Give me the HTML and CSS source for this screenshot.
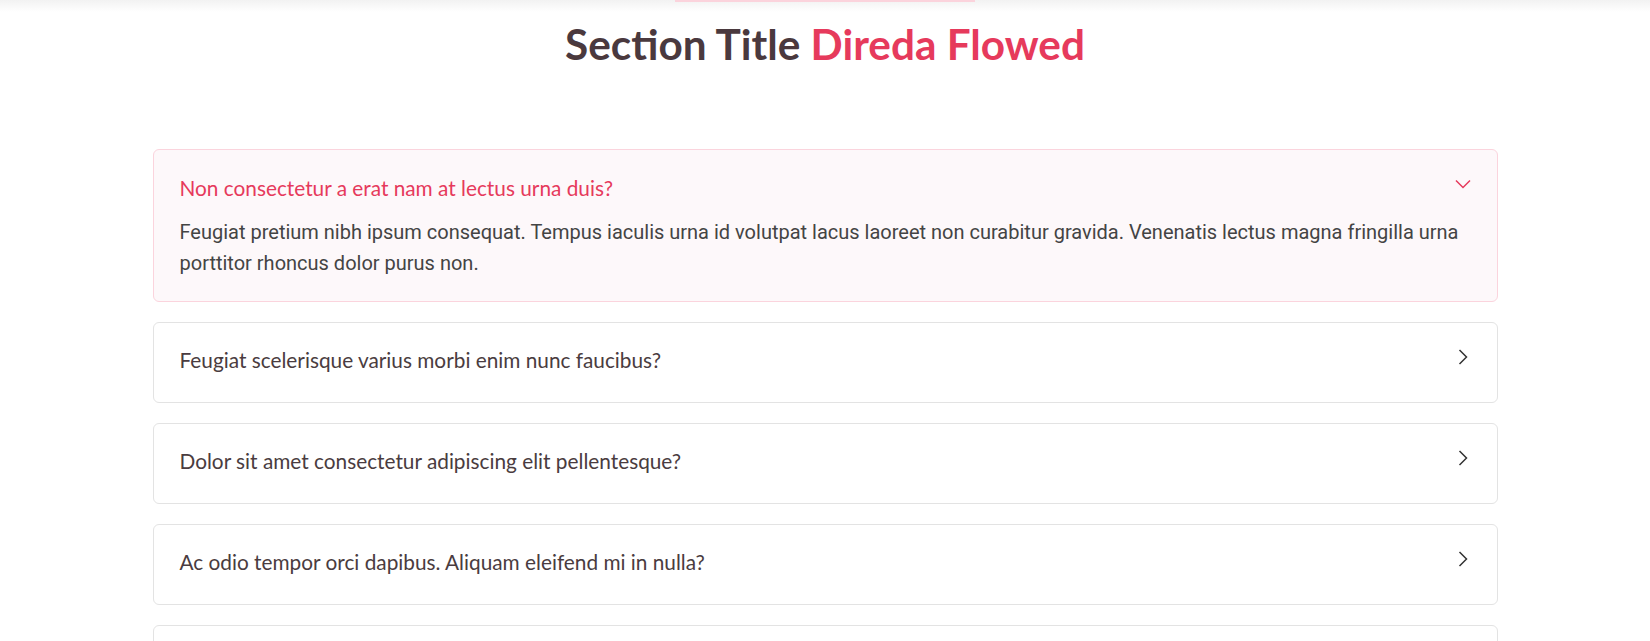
FILE: index.html
```html
<!DOCTYPE html>
<html lang="en">
<head>
<meta charset="utf-8">
<title>FAQ</title>
<link rel="stylesheet" href="styles.css">
</head>
<body>
<div class="topbar"><div class="topbar-accent"></div></div>
<section class="faq">
  <h2 class="faq-title">Section Title <span class="faq-title-accent">Direda Flowed</span></h2>
  <div class="faq-list">
    <div class="faq-item faq-item--active">
      <div class="faq-q">Non consectetur a erat nam at lectus urna duis?</div>
      <div class="faq-a">Feugiat pretium nibh ipsum consequat. Tempus iaculis urna id volutpat lacus laoreet non curabitur gravida. Venenatis lectus magna fringilla urna porttitor rhoncus dolor purus non.</div>
      <svg class="faq-icon" viewBox="0 0 16 16"><path d="M1 4.5 L8 11.5 L15 4.5"/></svg>
    </div>
    <div class="faq-item">
      <div class="faq-q">Feugiat scelerisque varius morbi enim nunc faucibus?</div>
      <svg class="faq-icon" viewBox="0 0 16 16"><path d="M1 4.5 L8 11.5 L15 4.5"/></svg>
    </div>
    <div class="faq-item">
      <div class="faq-q">Dolor sit amet consectetur adipiscing elit pellentesque?</div>
      <svg class="faq-icon" viewBox="0 0 16 16"><path d="M1 4.5 L8 11.5 L15 4.5"/></svg>
    </div>
    <div class="faq-item">
      <div class="faq-q">Ac odio tempor orci dapibus. Aliquam eleifend mi in nulla?</div>
      <svg class="faq-icon" viewBox="0 0 16 16"><path d="M1 4.5 L8 11.5 L15 4.5"/></svg>
    </div>
    <div class="faq-item">
      <div class="faq-q">Tempus quam pellentesque nec nam aliquam sem et tortor consequat?</div>
      <svg class="faq-icon" viewBox="0 0 16 16"><path d="M1 4.5 L8 11.5 L15 4.5"/></svg>
    </div>
  </div>
</section>
</body>
</html>
```
FILE: styles.css
```css
* { box-sizing: border-box; }
html, body { margin: 0; padding: 0; background: #fff; }
body { font-family: "Lato", "Noto Sans", sans-serif; color: #4a3c40; overflow: hidden; }

.topbar {
  height: 12px;
  background: linear-gradient(#f2f2f2, #ffffff);
}
.topbar-accent {
  width: 300px;
  height: 2px;
  margin: 0 auto;
  background: #fbd3dc;
}

.faq-title {
  margin: 8px 0 0;
  text-align: center;
  font-size: 42.3px;
  line-height: 48px;
  font-weight: 700;
  color: #4a393e;
}
.faq-title-accent { color: #e63a5c; }

.faq-list {
  width: 1345px;
  margin: 81px auto 0;
  display: flex;
  flex-direction: column;
  gap: 20px;
}

.faq-item {
  position: relative;
  border: 1px solid #e3e3e3;
  border-radius: 6px;
  background: #fff;
}
.faq-item--active {
  background: #fdf8fa;
  border-color: #fbd4dd;
  padding-bottom: 23px;
}

.faq-q {
  padding: 23px 80px 29px 26px;
  font-size: 20.8px;
  line-height: 27px;
  color: #4a3c40;
}
.faq-item--active .faq-q {
  color: #e63a5c;
  padding-top: 24px;
  padding-bottom: 16px;
}

.faq-a {
  padding: 0 26px;
  font-family: "Roboto", sans-serif;
  font-size: 20px;
  line-height: 30.5px;
  color: #444;
}

.faq-icon {
  position: absolute;
  top: 26px;
  right: 26px;
  width: 16px;
  height: 16px;
  fill: none;
  stroke: #333;
  stroke-width: 1.5;
  transform: rotate(-90deg);
}
.faq-item--active .faq-icon {
  stroke: #e63a5c;
  transform: none;
}
```
